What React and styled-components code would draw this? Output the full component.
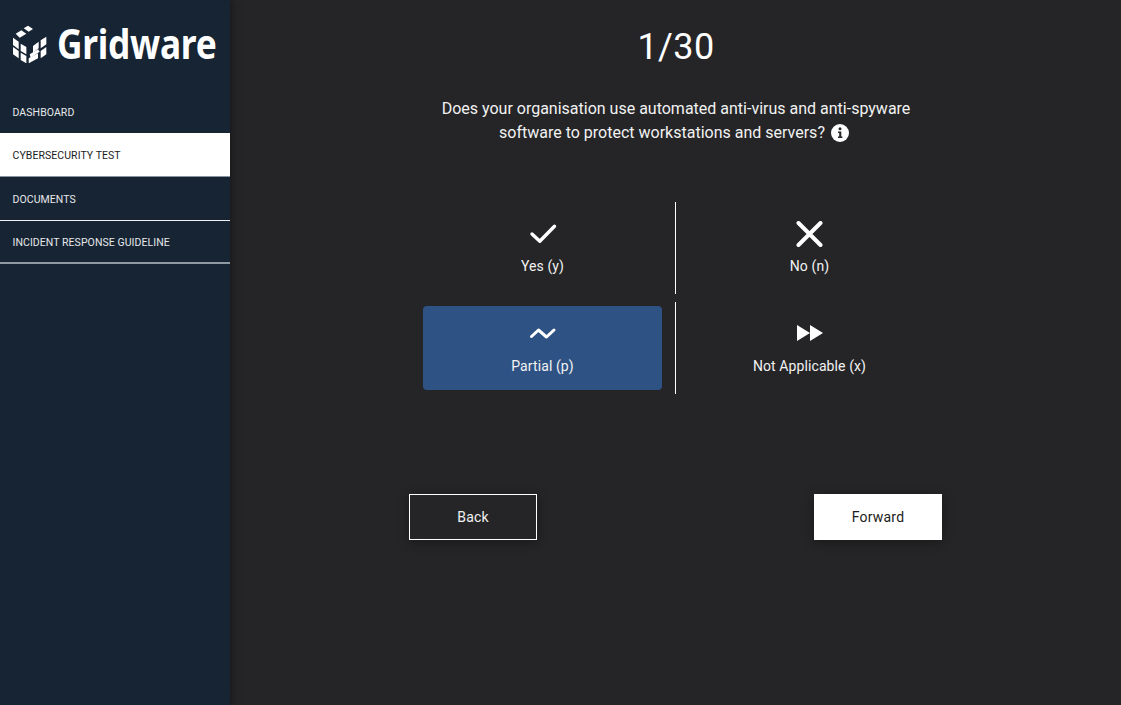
import React from 'react';
import styled, { createGlobalStyle } from 'styled-components';

const GlobalStyle = createGlobalStyle`
  html, body {
    margin: 0;
    height: 100%;
    background: #252527;
    font-family: Roboto, "Liberation Sans", sans-serif;
  }
  #root { height: 100%; }
`;

const Page = styled.div`
  display: flex;
  height: 705px;
  overflow: hidden;
`;

const Sidebar = styled.aside`
  width: 230px;
  flex: none;
  background: #172433;
  box-shadow: 2px 0 8px rgba(0, 0, 0, 0.35);
  z-index: 1;
`;

const Brand = styled.div`
  display: flex;
  align-items: center;
  gap: 7.5px;
  height: 89.8px;
  padding: 0 0 2px 13px;
  box-sizing: border-box;
`;

const BrandName = styled.span`
  font-family: "Noto Sans", sans-serif;
  font-size: 41px;
  font-weight: 700;
  letter-spacing: -0.3px;
  color: #fff;
  line-height: 1;
  display: inline-block;
  transform: scaleX(0.86);
  transform-origin: left center;
  white-space: nowrap;
`;

const NavItem = styled.div`
  height: 43.6px;
  display: flex;
  align-items: center;
  padding: 2px 0 0 12.5px;
  font-size: 10.5px;
  letter-spacing: 0.07px;
  color: ${p => (p.$active ? '#1c1c1c' : '#e6e8ea')};
  background: ${p => (p.$active ? '#fff' : 'transparent')};
  border-bottom: ${p => p.$lineWidth || 1}px solid ${p => p.$line || 'transparent'};
  box-sizing: border-box;
`;

const Main = styled.main`
  flex: 1;
  display: flex;
  flex-direction: column;
  align-items: center;
  padding-left: 1px;
`;

const Counter = styled.h1`
  margin: 25px 0 0;
  font-size: 36px;
  font-weight: 400;
  line-height: 44px;
  letter-spacing: 0.4px;
  color: #fff;
`;

const Question = styled.p`
  margin: 28px 0 0;
  width: 500px;
  text-align: center;
  font-size: 16px;
  line-height: 24px;
  color: #f2f2f2;
`;

const InfoIcon = styled.svg`
  width: 18px;
  height: 18px;
  vertical-align: -3.5px;
  margin: 0 4px 0 6px;
`;

const AnswerGrid = styled.div`
  margin-top: 57px;
  display: grid;
  grid-template-columns: 267px 267px;
  grid-auto-rows: 92px;
  row-gap: 8px;
`;

const Answer = styled.div`
  display: flex;
  justify-content: ${p => (p.$side === 'left' ? 'flex-end' : 'center')};
  align-items: stretch;
  padding: ${p => (p.$side === 'left' ? '4px 13px 4px 0' : '4px 0')};
  border-right: ${p => (p.$side === 'left' ? '1px solid #fff' : 'none')};
  box-sizing: border-box;
`;

const AnswerInner = styled.div`
  flex: ${p => (p.$side === 'left' ? '0 0 239px' : '1')};
  display: flex;
  flex-direction: column;
  align-items: center;
  border-radius: 4px;
  background: ${p => (p.$selected ? '#2e5284' : 'transparent')};
  color: #f2f2f2;
  font-size: 14px;
  letter-spacing: 0.1px;
  padding-top: ${p => p.$top}px;
`;

const IconBox = styled.svg`
  width: 30px;
  height: 30px;
  display: block;
  margin-bottom: ${p => p.$gap}px;
`;

const AnswerLabel = styled.span`
  line-height: 18px;
`;

const Buttons = styled.div`
  margin: 100px 1px 0 0;
  width: 533px;
  display: flex;
  justify-content: space-between;
`;

const NavButton = styled.button`
  width: 128px;
  height: 46px;
  font: 400 14px Roboto, sans-serif;
  letter-spacing: 0.2px;
  border: 1px solid #fff;
  border-radius: 0;
  background: ${p => (p.$filled ? '#fff' : 'transparent')};
  color: ${p => (p.$filled ? '#1c1c1c' : '#f2f2f2')};
  box-shadow: 0 2px 10px rgba(0, 0, 0, 0.35);
`;

const Logo = () => (
  <svg width="36.7" height="38.3" viewBox="25 12 110 115" fill="#fff" style={{ flex: 'none' }}>
    <polygon points="57,22 70,14 85,24 72,32" />
    <polygon points="33,38 50,28 65,38 45,50" />
    <polygon points="25,50 42,62 42,85 25,72" />
    <polygon points="25,78 42,90 42,112 25,100" />
    <polygon points="48,68 65,78 65,100 48,90" />
    <polygon points="48,95 65,105 65,127 48,117" />
    <polygon points="85,75 102,62 102,82 85,95" />
    <polygon points="108,58 125,47 125,70 108,82" />
    <polygon points="75,100 100,85 105,92 78,110" />
    <polygon points="108,90 125,78 125,100 108,112" />
    <polygon points="72,112 100,97 100,112 72,127" />
  </svg>
);

const answers = [
  { label: 'Yes (y)', side: 'left', top: 15, gap: 6, icon: <path d="M4 13 L11.8 20.3 L26.5 5.2" fill="none" stroke="#fff" strokeWidth="3.4" strokeLinecap="round" strokeLinejoin="round" /> },
  { label: 'No (n)', side: 'right', top: 15, gap: 6, icon: <path d="M3.5 2 L25.5 24 M25.5 2 L3.5 24" fill="none" stroke="#fff" strokeWidth="4" strokeLinecap="round" /> },
  { label: 'Partial (p)', side: 'left', selected: true, top: 12, gap: 8.5, icon: <path d="M3.5 18.5 L10.5 12 L18.5 19 L26 12" fill="none" stroke="#fff" strokeWidth="3" strokeLinecap="round" strokeLinejoin="round" /> },
  { label: 'Not Applicable (x)', side: 'right', top: 13, gap: 8, icon: <path d="M2 6 L15 14 L2 22 Z M15 6 L28 14 L15 22 Z" fill="#fff" /> },
];

export default function App() {
  return (
    <Page>
      <GlobalStyle />
      <Sidebar>
        <Brand>
          <Logo />
          <BrandName>Gridware</BrandName>
        </Brand>
        <nav>
          <NavItem>DASHBOARD</NavItem>
          <NavItem $active $line="#8a949e">CYBERSECURITY TEST</NavItem>
          <NavItem $line="#f2f2f2">DOCUMENTS</NavItem>
          <NavItem $line="#8f99a1" $lineWidth={2}>INCIDENT RESPONSE GUIDELINE</NavItem>
        </nav>
      </Sidebar>
      <Main>
        <Counter>1/30</Counter>
        <Question>
          Does your organisation use automated anti-virus and anti-spyware software to protect workstations and servers?
          <InfoIcon viewBox="0 0 18 18">
            <circle cx="9" cy="9" r="9" fill="#fff" />
            <circle cx="9" cy="4.8" r="1.5" fill="#252527" />
            <path d="M7 7.6 H10.3 V12.6 H11.4 V14 H7 V12.6 H8.2 V9 H7 Z" fill="#252527" />
          </InfoIcon>
        </Question>
        <AnswerGrid>
          {answers.map(a => (
            <Answer key={a.label} $side={a.side}>
              <AnswerInner $side={a.side} $selected={a.selected} $top={a.top}>
                <IconBox viewBox="0 0 30 30" $gap={a.gap}>{a.icon}</IconBox>
                <AnswerLabel>{a.label}</AnswerLabel>
              </AnswerInner>
            </Answer>
          ))}
        </AnswerGrid>
        <Buttons>
          <NavButton>Back</NavButton>
          <NavButton $filled>Forward</NavButton>
        </Buttons>
      </Main>
    </Page>
  );
}
